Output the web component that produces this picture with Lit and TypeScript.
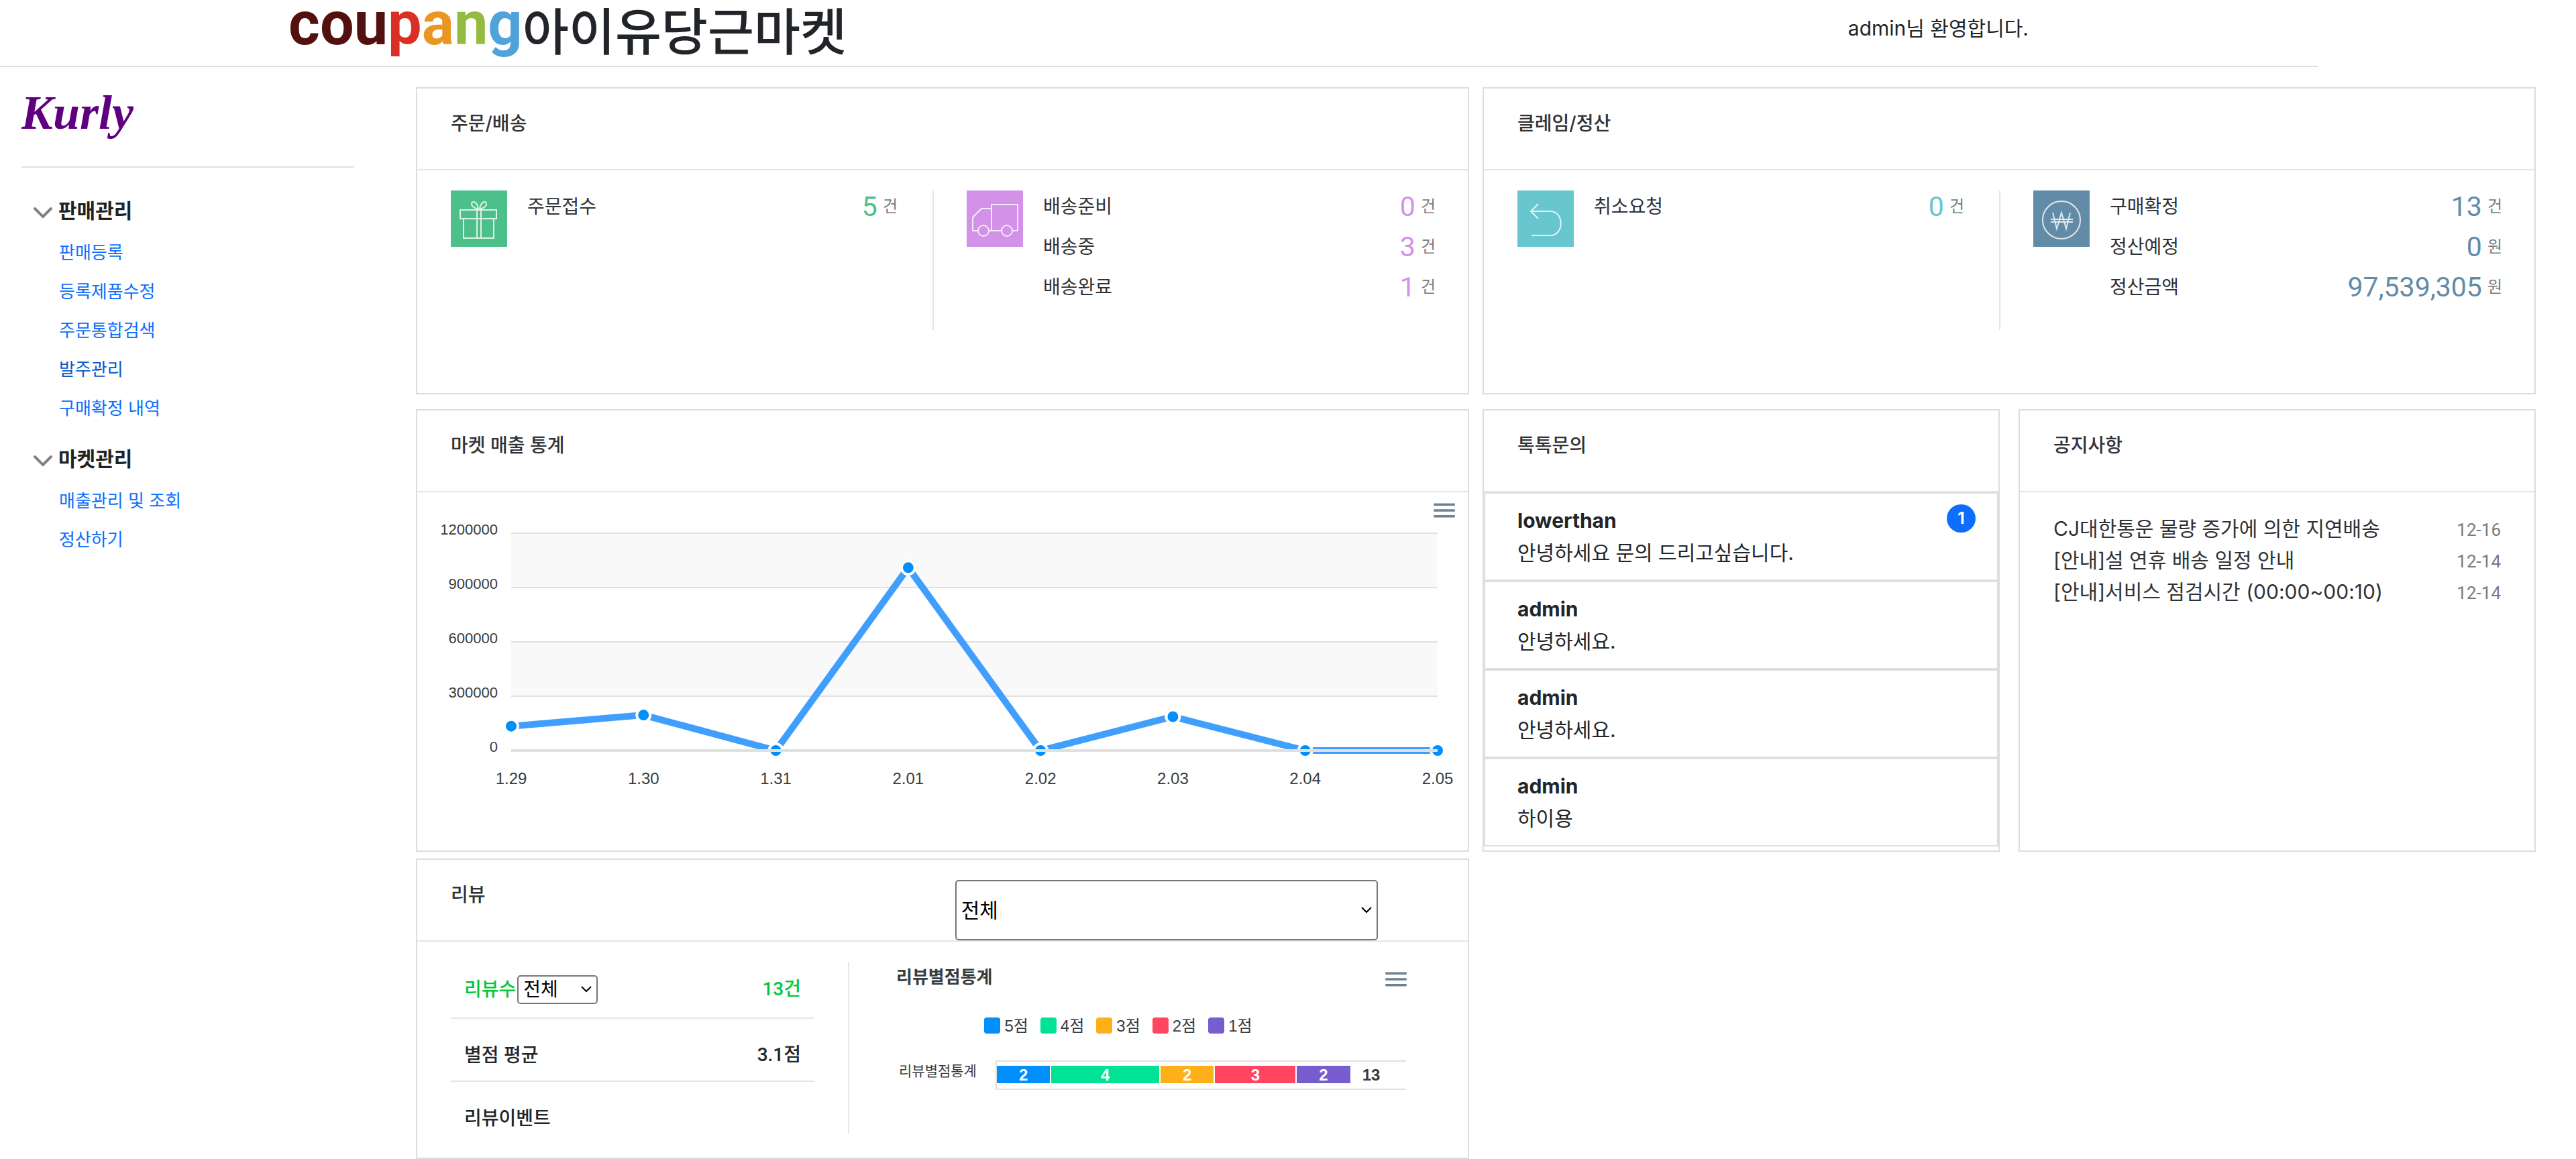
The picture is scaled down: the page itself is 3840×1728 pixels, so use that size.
import { LitElement, html, svg, css } from "lit";
import { customElement, property } from "lit/decorators.js";

const base = css`
  * {
    box-sizing: border-box;
  }
  h1,
  h2,
  h3,
  p,
  ul,
  dl,
  dd {
    margin: 0;
    padding: 0;
  }
  ul {
    list-style: none;
  }
  a {
    text-decoration: none;
    color: inherit;
  }
  button {
    border: 0;
    padding: 0;
    background: none;
    cursor: pointer;
  }
  svg {
    display: block;
  }
`;

const menuIcon = html`
  <svg width="42" height="42" viewBox="0 0 24 24" aria-hidden="true">
    <path d="M3 6h18v2H3zM3 11h18v2H3zM3 16h18v2H3z" fill="#6e8192"></path>
  </svg>
`;

@customElement("select-box")
class SelectBox extends LitElement {
  @property() name = "";
  @property() label = "";
  @property({ type: Boolean, reflect: true }) large = false;

  static styles = [
    base,
    css`
      :host {
        display: grid;
        grid-template-rows: 100%;
        width: 120px;
        height: 43px;
        font-size: 28px;
        font-weight: 400;
        line-height: 36px;
      }
      :host([large]) {
        width: auto;
        height: 90px;
        font-size: 30px;
      }
      .field,
      .arrow {
        grid-area: 1 / 1;
      }
      .field {
        appearance: none;
        width: 100%;
        height: 100%;
        padding: 0 7px;
        border: 2px solid #767676;
        border-radius: 5px;
        background: #fff;
        color: #000;
        font: inherit;
      }
      .arrow {
        justify-self: end;
        align-self: center;
        margin-right: 8px;
        pointer-events: none;
      }
    `,
  ];

  render() {
    return html`
      <select class="field" name=${this.name} aria-label=${this.label}>
        <option>전체</option>
      </select>
      <svg class="arrow" width="18" height="12" viewBox="0 0 18 12" aria-hidden="true">
        <path d="M2 2l7 7 7-7" fill="none" stroke="#000" stroke-width="2"></path>
      </svg>
    `;
  }
}

interface Stat {
  label: string;
  value: string;
  unit: string;
}
interface StatGroup {
  color: string;
  icon: unknown;
  rows: Stat[];
}

const giftIcon = svg`
  <path d="M14 29h54v13H14zM19 42v29h45V42M39 29v42M45 29v42" />
  <path d="M41 28C34 26 31 23 31 20c0-5 8-5 10 8M43 28c7-2 10-5 10-8 0-5-8-5-10 8" />`;
const truckIcon = svg`
  <path d="M52 60H33M17 60H9V40l13-13h15M37 60V21h39v39h-8" />
  <circle cx="25" cy="60" r="8" /><circle cx="60" cy="60" r="8" />`;
const returnIcon = svg`
  <path d="M31 20L20 31l11 11M20 31h29c21 0 21 36 0 36H21" />`;
const wonIcon = svg`
  <circle cx="42" cy="44" r="28" />
  <path d="M29 33l6 24 7-24 7 24 6-24M26 43h33M26 47h33" />`;

@customElement("stat-groups")
class StatGroups extends LitElement {
  @property({ attribute: false }) groups: StatGroup[] = [];

  static styles = [
    base,
    css`
      :host {
        display: grid;
        grid-template-columns: 720fr 748fr;
        padding: 30px 48px 94px 50px;
      }
      .group {
        display: flex;
        align-items: flex-start;
        gap: 30px;
        min-height: 208px;
      }
      .group:first-child {
        padding-right: 52px;
        border-right: 2px solid #e3e6ef;
      }
      .group:last-child {
        padding-left: 49px;
      }
      .tile {
        flex: none;
        background: var(--tone);
      }
      .rows {
        flex: 1;
        display: grid;
        gap: 12px;
      }
      .row {
        display: flex;
        justify-content: space-between;
        height: 48px;
        font-size: 28px;
        line-height: 48px;
        color: #303236;
      }
      .value {
        display: flex;
        align-items: center;
        gap: 8px;
      }
      .number {
        font-family: Roboto, "Noto Sans CJK KR", sans-serif;
        font-size: 41px;
        color: var(--tone);
      }
      .unit {
        font-size: 24px;
        color: #777a80;
      }
    `,
  ];

  render() {
    return this.groups.map(
      (g) => html`
        <div class="group" style="--tone: ${g.color}">
          <svg class="tile" width="84" height="84" viewBox="0 0 84 84" fill="none"
            stroke="#fff" stroke-opacity="0.8" stroke-width="2" aria-hidden="true">${g.icon}</svg>
          <dl class="rows">
            ${g.rows.map(
              (r) => html`
                <div class="row">
                  <dt>${r.label}</dt>
                  <dd class="value"><a class="number" href="#">${r.value}</a><span class="unit">${r.unit}</span></dd>
                </div>
              `
            )}
          </dl>
        </div>
      `
    );
  }
}

@customElement("sales-chart")
class SalesChart extends LitElement {
  private points: [string, number][] = [
    ["1.29", 134400],
    ["1.30", 196000],
    ["1.31", 0],
    ["2.01", 1010000],
    ["2.02", 0],
    ["2.03", 187000],
    ["2.04", 0],
    ["2.05", 0],
  ];

  static styles = [
    base,
    css`
      :host {
        display: block;
        position: relative;
      }
      .plot {
        width: 100%;
        height: auto;
        font-family: "Liberation Sans", Arial, sans-serif;
        fill: #373d3f;
      }
      .tick {
        font-size: 22px;
        text-anchor: end;
      }
      .day {
        font-size: 24px;
        text-anchor: middle;
      }
      .menu {
        position: absolute;
        top: 6px;
        right: 14px;
      }
    `,
  ];

  render() {
    const left = 140;
    const right = 1521;
    const zero = 385;
    const step = 81;
    const x = (i: number) => left + (i * (right - left)) / 7;
    const y = (v: number) => zero - (v / 300000) * step;
    const ticks = [1200000, 900000, 600000, 300000, 0];
    return html`
      <svg class="plot" viewBox="0 0 1566 534" role="img" aria-label="마켓 매출 통계">
        ${[1200000, 600000].map(
          (t) => svg`<rect x=${left} y=${y(t)} width=${right - left} height=${step} fill="#f9f9f9" />`
        )}
        ${ticks.map(
          (t) => svg`
            <line x1=${left} x2=${right} y1=${y(t)} y2=${y(t)} stroke="#e0e0e0" stroke-width="2" />
            <text class="tick" x="120" y=${y(t) + 2}>${t}</text>`
        )}
        <polyline points=${this.points.map(([, v], i) => `${x(i)},${y(v)}`).join(" ")}
          fill="none" stroke="#409ffc" stroke-width="10"></polyline>
        ${this.points.map(
          ([d, v], i) => svg`
            <circle cx=${x(i)} cy=${y(v)} r="10" fill="#008ffb" stroke="#fff" stroke-width="4" />
            <text class="day" x=${x(i)} y="435">${d}</text>`
        )}
        <line x1=${left} x2=${right} y1=${zero} y2=${zero} stroke="#e0e0e0" stroke-width="4"></line>
      </svg>
      <button class="menu" aria-label="메뉴">${menuIcon}</button>
    `;
  }
}

@customElement("review-panel")
class ReviewPanel extends LitElement {
  private scores = [
    { label: "5점", count: 2, color: "#008ffb" },
    { label: "4점", count: 4, color: "#00e396" },
    { label: "3점", count: 2, color: "#feb019" },
    { label: "2점", count: 3, color: "#ff4560" },
    { label: "1점", count: 2, color: "#775dd0" },
  ];

  static styles = [
    base,
    css`
      :host {
        display: grid;
        grid-template-columns: 594fr 872fr;
        padding: 30px 50px 36px;
      }
      .summary {
        min-height: 256px;
        padding-right: 50px;
        border-right: 2px solid #e3e6ef;
        font-size: 28px;
        font-weight: 500;
        line-height: 46px;
        color: #222529;
      }
      .line {
        display: flex;
        justify-content: space-between;
        padding: 31px 20px 15px;
        border-bottom: 2px solid #e3e6ef;
      }
      .line:first-child {
        padding: 18px 20px 19px;
        color: #03c73c;
      }
      .line:last-child {
        border-bottom: 0;
        padding-bottom: 0;
      }
      .count {
        display: flex;
        align-items: center;
        gap: 2px;
      }
      .strong {
        font-family: Roboto, "Noto Sans CJK KR", sans-serif;
      }
      .chart {
        position: relative;
        padding: 5px 42px 0 70px;
        font-family: "Liberation Sans", "Noto Sans CJK KR", sans-serif;
        color: #373d3f;
      }
      .menu {
        position: absolute;
        top: 5px;
        right: 36px;
      }
      .title {
        font-size: 26px;
        line-height: 36px;
        font-weight: 700;
      }
      .legend {
        display: flex;
        justify-content: center;
        gap: 18px;
        margin: 40px 0 36px;
        padding-right: 98px;
        font-size: 24px;
        line-height: 30px;
      }
      .key {
        display: flex;
        gap: 6px;
      }
      .swatch {
        width: 24px;
        height: 24px;
        margin-top: 2px;
        border-radius: 4px;
      }
      .bars {
        display: grid;
        grid-template-columns: 148px 1fr;
      }
      .name {
        padding-left: 4px;
        font-size: 21px;
        line-height: 32px;
      }
      .track {
        display: flex;
        height: 44px;
        padding: 6px 0 8px;
        border: solid #e0e0e0;
        border-width: 2px 0 2px 2px;
        font-size: 24px;
        font-weight: 700;
        line-height: 28px;
      }
      .bar {
        border-right: 2px solid #fff;
        color: #fff;
        text-align: center;
      }
      .total {
        margin-left: 16px;
      }
    `,
  ];

  render() {
    return html`
      <div class="summary">
        <div class="line">
          <span class="count">리뷰수<select-box name="period" label="리뷰수"></select-box></span>
          <span class="strong">13건</span>
        </div>
        <div class="line"><span>별점 평균</span><span class="strong">3.1점</span></div>
        <div class="line"><span>리뷰이벤트</span></div>
      </div>
      <div class="chart">
        <button class="menu" aria-label="메뉴">${menuIcon}</button>
        <h3 class="title">리뷰별점통계</h3>
        <ul class="legend">
          ${this.scores.map(
            (s) => html`<li class="key"><span class="swatch" style="background: ${s.color}"></span>${s.label}</li>`
          )}
        </ul>
        <div class="bars">
          <span class="name">리뷰별점통계</span>
          <div class="track">
            ${this.scores.map(
              (s) => html`<span class="bar" style="width: ${(s.count / 15) * 100}%; background: ${s.color}; background-clip: padding-box">${s.count}</span>`
            )}
            <span class="total">13</span>
          </div>
        </div>
      </div>
    `;
  }
}

@customElement("side-menu")
class SideMenu extends LitElement {
  private groups = [
    {
      title: "판매관리",
      links: ["판매등록", "등록제품수정", "주문통합검색", "발주관리", "구매확정 내역"],
    },
    { title: "마켓관리", links: ["매출관리 및 조회", "정산하기"] },
  ];

  static styles = [
    base,
    css`
      :host {
        display: block;
        padding: 24px 32px;
      }
      .brand {
        display: block;
        height: 126px;
        border-bottom: 2px solid #dee2e6;
        margin-bottom: 40px;
      }
      .word {
        font: italic 700 72px "Liberation Serif", serif;
        fill: #5f0080;
      }
      .group {
        margin-bottom: 22px;
        padding-left: 16px;
      }
      .title {
        display: flex;
        align-items: center;
        gap: 7px;
        width: 100%;
        margin-bottom: 10px;
        font-family: inherit;
        font-size: 30px;
        line-height: 48px;
        font-weight: 700;
        color: #222;
      }
      .link {
        display: block;
        padding-left: 40px;
        font-size: 26px;
        line-height: 58px;
        color: #0d6efd;
      }
      .link.current {
        color: #0a58ca;
      }
    `,
  ];

  render() {
    return html`
      <a class="brand" href="#" aria-label="Kurly">
        <svg width="200" height="110" viewBox="0 0 200 110">
          <text class="word" x="-1" y="68">Kurly</text>
        </svg>
      </a>
      ${this.groups.map(
        (g) => html`
          <section class="group">
            <button class="title">
              <svg width="32" height="32" viewBox="0 0 32 32" aria-hidden="true">
                <path d="M4 13l12 12 12-12" fill="none" stroke="#808080" stroke-width="4" stroke-linecap="round"></path>
              </svg>
              ${g.title}
            </button>
            <nav>
              ${g.links.map(
                (l) => html`<a class="link ${l === "발주관리" ? "current" : ""}" href="#">${l}</a>`
              )}
            </nav>
          </section>
        `
      )}
    `;
  }
}

@customElement("app-root")
class AppRoot extends LitElement {
  private orders: StatGroup[] = [
    { color: "#4dc08a", icon: giftIcon, rows: [{ label: "주문접수", value: "5", unit: "건" }] },
    {
      color: "#d391e8",
      icon: truckIcon,
      rows: [
        { label: "배송준비", value: "0", unit: "건" },
        { label: "배송중", value: "3", unit: "건" },
        { label: "배송완료", value: "1", unit: "건" },
      ],
    },
  ];

  private claims: StatGroup[] = [
    { color: "#68c6cf", icon: returnIcon, rows: [{ label: "취소요청", value: "0", unit: "건" }] },
    {
      color: "#618ba6",
      icon: wonIcon,
      rows: [
        { label: "구매확정", value: "13", unit: "건" },
        { label: "정산예정", value: "0", unit: "원" },
        { label: "정산금액", value: "97,539,305", unit: "원" },
      ],
    },
  ];

  private chats = [
    { name: "lowerthan", text: "안녕하세요 문의 드리고싶습니다.", unread: 1 },
    { name: "admin", text: "안녕하세요.", unread: 0 },
    { name: "admin", text: "안녕하세요.", unread: 0 },
    { name: "admin", text: "하이용", unread: 0 },
  ];

  private notices = [
    { text: "CJ대한통운 물량 증가에 의한 지연배송", date: "12-16" },
    { text: "[안내]설 연휴 배송 일정 안내", date: "12-14" },
    { text: "[안내]서비스 점검시간 (00:00~00:10)", date: "12-14" },
  ];

  static styles = [
    base,
    css`
      :host {
        display: block;
        background: #fff;
        color: #212529;
        font-family: Inter, "Noto Sans CJK KR", sans-serif;
      }
      .top {
        display: flex;
        justify-content: space-between;
        width: 90%;
        height: 100px;
        padding: 0 11.25%;
        border-bottom: 2px solid #dee2e6;
      }
      .home {
        display: flex;
      }
      .logo {
        overflow: visible;
        font: 700 90px Roboto, sans-serif;
      }
      .c1 {
        fill: #521010;
      }
      .c2 {
        fill: #d93025;
      }
      .c3 {
        fill: #e89722;
      }
      .c4 {
        fill: #92bb3f;
      }
      .c5 {
        fill: #4fa2da;
      }
      .market {
        font-size: 75px;
        line-height: 96px;
        font-weight: 500;
      }
      .welcome {
        font-size: 30px;
        line-height: 84px;
      }
      .body {
        display: grid;
        grid-template-columns: 560px 1fr;
      }
      .main {
        display: grid;
        grid-template-columns: 1fr 1fr;
        column-gap: 20px;
        align-content: start;
        padding: 30px 60px 0;
      }
      .card {
        border: 2px solid #dadde2;
      }
      .first {
        margin-bottom: 22px;
      }
      .second {
        margin-bottom: 10px;
      }
      .pair {
        display: grid;
        grid-template-columns: 1fr 1fr;
        column-gap: 28px;
      }
      .head {
        display: flex;
        justify-content: space-between;
        height: 122px;
        padding: 0 50px;
        border-bottom: 2px solid #e0e5ee;
      }
      .heading {
        padding-top: 31px;
        font-size: 28px;
        line-height: 42px;
        font-weight: 500;
        color: #303236;
      }
      .filter {
        align-self: end;
        width: 43%;
        margin-right: 84px;
      }
      .chat {
        display: grid;
        grid-template-columns: 1fr auto;
        padding: 16px 32px 16px 48px;
        border: 2px solid #dedede;
        line-height: 48px;
        font-size: 30px;
      }
      .name {
        font-size: 30px;
        font-weight: 700;
      }
      .badge {
        min-width: 43px;
        height: 42px;
        border-radius: 21px;
        background: #0d6efd;
        color: #fff;
        font-size: 24px;
        line-height: 42px;
        font-weight: 700;
        text-align: center;
      }
      .message {
        grid-column: 1 / -1;
      }
      .notices {
        padding: 31px 50px;
      }
      .notice {
        display: flex;
        justify-content: space-between;
        align-items: baseline;
        height: 47px;
        font-size: 30px;
        line-height: 47px;
        color: #303236;
      }
      .date {
        font-family: Roboto, sans-serif;
        font-size: 26px;
        color: #777a80;
      }
    `,
  ];

  render() {
    return html`
      <header class="top">
        <a class="home" href="#">
          <svg class="logo" width="347" height="98" viewBox="0 0 347 98" aria-label="coupang">
            <text x="-2" y="66"><tspan class="c1">cou</tspan><tspan class="c2">p</tspan><tspan class="c3">a</tspan><tspan class="c4">n</tspan><tspan class="c5">g</tspan></text>
          </svg>
          <h1 class="market">아이유당근마켓</h1>
        </a>
        <p class="welcome">admin님 환영합니다.</p>
      </header>
      <div class="body">
        <side-menu></side-menu>
        <main class="main">
          <section class="card first">
            <div class="head"><h2 class="heading">주문/배송</h2></div>
            <stat-groups .groups=${this.orders}></stat-groups>
          </section>
          <section class="card first">
            <div class="head"><h2 class="heading">클레임/정산</h2></div>
            <stat-groups .groups=${this.claims}></stat-groups>
          </section>
          <section class="card second">
            <div class="head"><h2 class="heading">마켓 매출 통계</h2></div>
            <sales-chart></sales-chart>
          </section>
          <div class="pair second">
            <section class="card">
              <div class="head"><h2 class="heading">톡톡문의</h2></div>
              ${this.chats.map(
                (c) => html`
                  <a class="chat" href="#">
                    <strong class="name">${c.name}</strong>
                    ${c.unread ? html`<span class="badge">${c.unread}</span>` : ""}
                    <span class="message">${c.text}</span>
                  </a>
                `
              )}
            </section>
            <section class="card">
              <div class="head"><h2 class="heading">공지사항</h2></div>
              <ul class="notices">
                ${this.notices.map(
                  (n) => html`<li class="notice"><a href="#">${n.text}</a><span class="date">${n.date}</span></li>`
                )}
              </ul>
            </section>
          </div>
          <section class="card">
            <div class="head">
              <h2 class="heading">리뷰</h2>
              <select-box class="filter" large name="review" label="리뷰"></select-box>
            </div>
            <review-panel></review-panel>
          </section>
        </main>
      </div>
    `;
  }
}
